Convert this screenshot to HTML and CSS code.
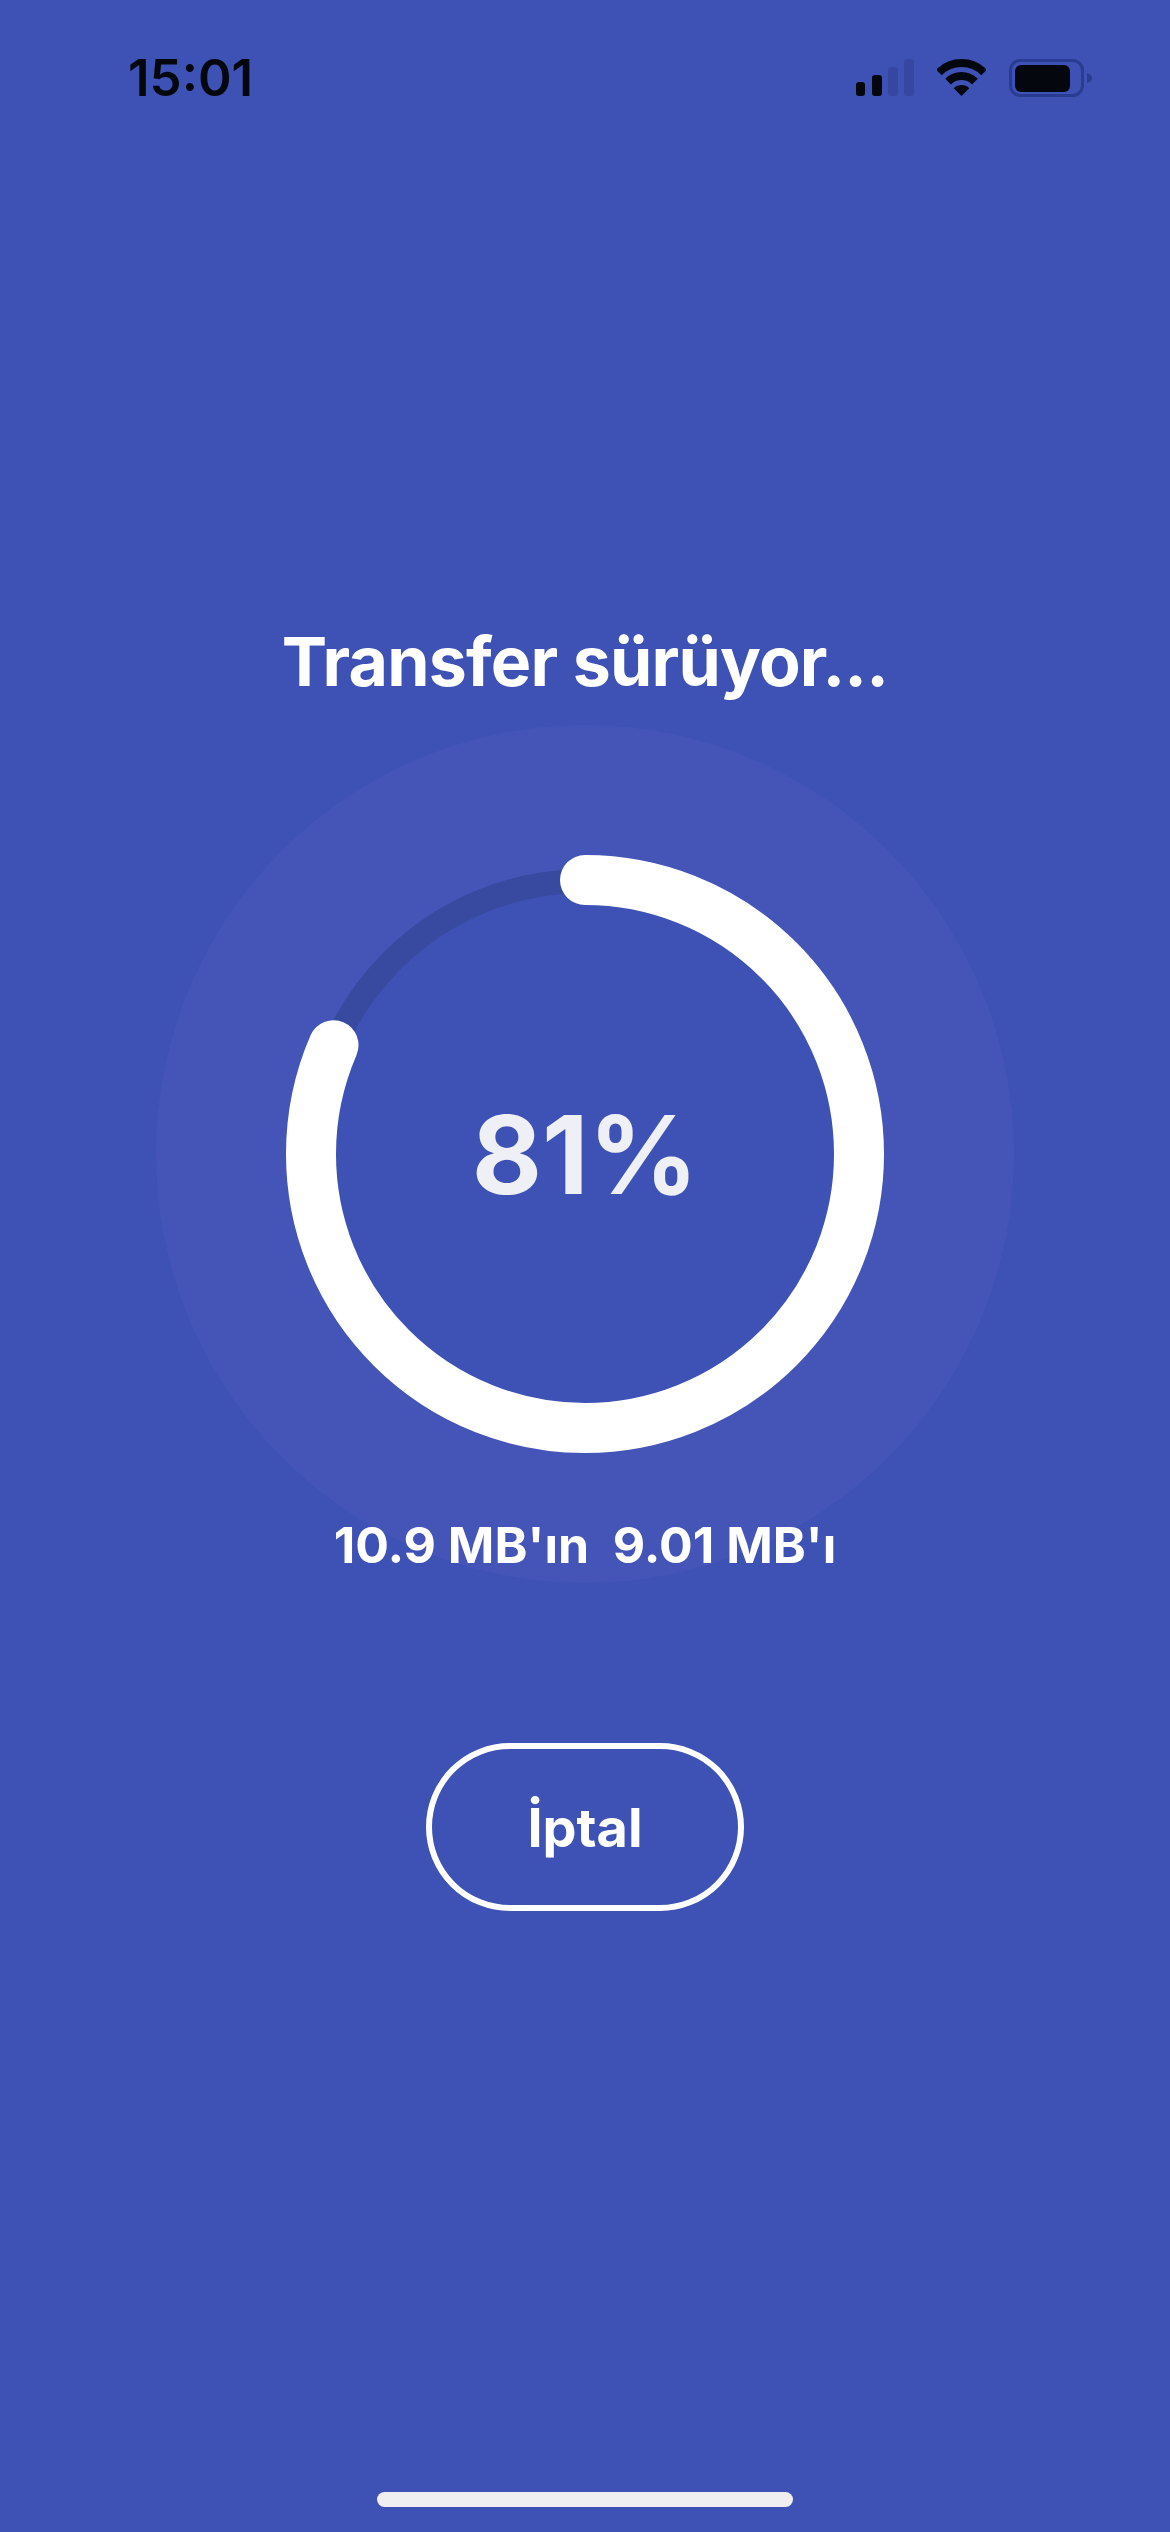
FILE: index.html

```html
<!DOCTYPE html>
<html lang="tr">
<head>
<meta charset="utf-8"/>
<title>Transfer sürüyor</title>
<link rel="stylesheet" href="styles.css">
</head>
<body>
<div class="screen">
  <div class="status-bar">
    <span class="time">15:01</span>
    <div class="status-icons">
      <svg class="signal" width="58" height="37" viewBox="0 0 58 37">
        <rect x="0" y="23" width="9" height="14" rx="3" fill="#05070f"/>
        <rect x="16" y="16" width="10" height="21" rx="3" fill="#05070f"/>
        <rect x="32" y="8" width="10" height="29" rx="3" fill="#3547a0"/>
        <rect x="48" y="0" width="10" height="37" rx="3" fill="#3547a0"/>
      </svg>
      <svg class="wifi" width="49" height="37" viewBox="0 0 49 37">
        <path d="M1.9 13.4A32 32 0 0 1 47.1 13.4" fill="none" stroke="#05070f" stroke-width="8"/>
        <path d="M11.1 22.6A19 19 0 0 1 37.9 22.6" fill="none" stroke="#05070f" stroke-width="8"/>
        <path d="M24.5 37L16.7 29.2A11 11 0 0 1 32.3 29.2Z" fill="#05070f"/>
      </svg>
      <svg class="battery" width="83" height="38" viewBox="0 0 83 38">
        <rect x="1.5" y="1.5" width="72" height="35" rx="10" fill="none" stroke="#2a3b92" stroke-width="3"/>
        <rect x="6" y="6" width="55" height="27" rx="6" fill="#05070f"/>
        <path d="M78 14C81 15 83 17 83 19C83 21 81 23 78 24Z" fill="#2a3b92"/>
      </svg>
    </div>
  </div>

  <h1 class="title">Transfer sürüyor...</h1>

  <div class="progress-disc">
    <div class="ring">
      <svg width="600" height="600" viewBox="0 0 600 600">
        <circle class="ring-inner" cx="300" cy="300" r="261"/>
        <circle class="ring-track" cx="300" cy="300" r="273"/>
        <circle class="ring-bar" cx="300" cy="300" r="274" pathLength="100" stroke-dasharray="81.5 100" transform="rotate(-90 300 300)"/>
      </svg>
      <div class="percent">81%</div>
    </div>
    <div class="sizes">10.9 MB'ın&nbsp; 9.01 MB'ı</div>
  </div>

  <button class="cancel">İptal</button>

  <div class="home-indicator"></div>
</div>
</body>
</html>
```

FILE: styles.css

```css
html, body {
    margin: 0;
    padding: 0;
}
body {
    background-color: #3e51b4;
    font-family: Inter, "Liberation Sans", sans-serif;
    color: #fff;
}
.screen {
    width: 1170px;
    height: 2532px;
    display: flex;
    flex-direction: column;
    align-items: center;
    overflow: hidden;
}

.status-bar {
    width: 100%;
    box-sizing: border-box;
    height: 96px;
    padding: 53px 78px 0 128px;
    display: flex;
    justify-content: space-between;
    align-items: flex-start;
}
.time {
    font-size: 51px;
    line-height: 50px;
    font-weight: 600;
    color: #05070f;
}
.status-icons {
    margin-top: 6px;
    display: flex;
    align-items: flex-start;
    gap: 23px;
}

.title {
    margin: 523px 0 0 0;
    font-size: 68px;
    line-height: 84px;
    font-weight: 700;
    letter-spacing: -0.8px;
}

.progress-disc {
    margin-top: 22px;
    width: 858px;
    height: 858px;
    box-sizing: border-box;
    padding-top: 129px;
    border-radius: 50%;
    background-color: #4455b7;
    display: flex;
    flex-direction: column;
    align-items: center;
}
.ring {
    position: relative;
    width: 600px;
    height: 600px;
}
.ring svg {
    display: block;
}
.ring-inner {
    fill: #3e51b4;
}
.ring-track {
    fill: none;
    stroke: #374a9f;
    stroke-width: 24;
}
.ring-bar {
    fill: none;
    stroke: #fff;
    stroke-width: 50;
    stroke-linecap: round;
}
.percent {
    position: absolute;
    inset: 0;
    display: flex;
    align-items: center;
    justify-content: center;
    font-size: 108px;
    font-weight: 700;
    color: #eef0f5;
}

.sizes {
    margin-top: 61px;
    font-size: 50px;
    line-height: 60px;
    font-weight: 700;
    white-space: nowrap;
}

.cancel {
    margin-top: 160px;
    width: 318px;
    height: 168px;
    border: 6px solid #fff;
    border-radius: 84px;
    background: transparent;
    color: #fff;
    font-family: inherit;
    font-size: 54px;
    font-weight: 700;
}

.home-indicator {
    margin-top: auto;
    margin-bottom: 25px;
    width: 416px;
    height: 15px;
    border-radius: 8px;
    background-color: #efeff1;
}
```
